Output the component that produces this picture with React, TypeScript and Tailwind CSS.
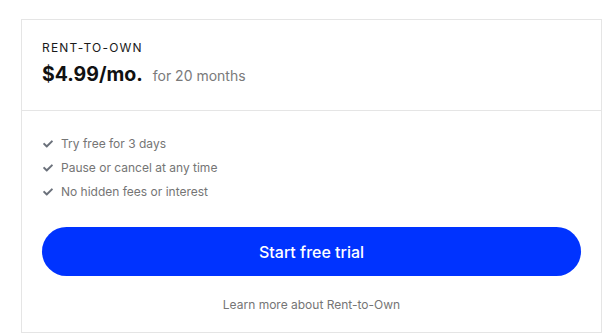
import React from 'react';
import { FaCheck } from 'react-icons/fa';

const perks = ['Try free for 3 days', 'Pause or cancel at any time', 'No hidden fees or interest'];

export default function App() {
  return (
    <div className="min-h-screen bg-white pt-[19px] pl-[21px]" style={{ fontFamily: 'Inter, "Noto Sans", sans-serif' }}>
      <div className="w-[581px] border border-[#e5e5e5] bg-white">
        {/* Header */}
        <div className="border-b border-[#e5e5e5] px-5 pt-5 pb-[22px]">
          <p className="text-[12px] leading-4 tracking-[0.1em] text-[#1a1a1a]">RENT-TO-OWN</p>
          <div className="mt-1 flex items-baseline gap-2.5">
            <span className="text-[19.5px] leading-7 font-bold text-[#111]">$4.99/mo.</span>
            <span className="text-[14px] text-[#7a7a7a]">for 20 months</span>
          </div>
        </div>

        {/* Perks + CTA */}
        <div className="px-5 pt-[21px] pb-[17px]">
          <ul>
            {perks.map((perk) => (
              <li key={perk} className="flex h-6 items-center gap-[8px] pl-px text-[12px] text-[#757575]">
                <FaCheck className="h-[10px] w-[10px] text-[#6b717b]" />
                <span>{perk}</span>
              </li>
            ))}
          </ul>
          <button className="mt-[23px] h-[49px] w-full rounded-full bg-[#0033ff] text-[16px] font-medium text-white">
            Start free trial
          </button>
          <p className="mt-[19px] text-center text-[12px] leading-5 text-[#757575]">Learn more about Rent-to-Own</p>
        </div>
      </div>
    </div>
  );
}
